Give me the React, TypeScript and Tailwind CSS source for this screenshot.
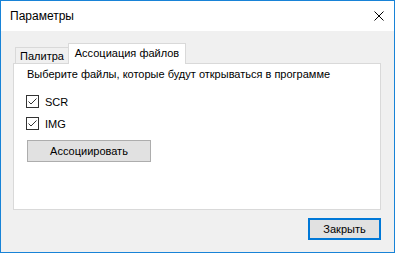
import React from 'react';

function CheckBox({ label }: { label: string }) {
  return (
    <label className="flex items-center h-[13px]">
      <span className="w-[13px] h-[13px] border border-[#333333] bg-white flex items-center justify-center">
        <svg width="11" height="11" viewBox="0 0 11 11" fill="none">
          <path d="M1.5 5.5 L4 8 L9.5 2.5" stroke="#333333" strokeWidth="1" />
        </svg>
      </span>
      <span className="ml-[6px] leading-[16px]">{label}</span>
    </label>
  );
}

export default function App() {
  return (
    <div className="w-[395px] h-[253px] border border-[#1883d7] bg-[#f0f0f0] flex flex-col text-[11px] text-black whitespace-nowrap font-['Liberation_Sans',Arial,sans-serif]">
      {/* заголовок окна */}
      <div className="h-[30px] bg-white flex items-center justify-between pl-[9px] pr-[10px]">
        <span className="leading-[16px] text-[12px]">Параметры</span>
        <svg width="10" height="10" viewBox="0 0 10 10" fill="none">
          <path d="M0.5 0.5 L9.5 9.5 M9.5 0.5 L0.5 9.5" stroke="#000" strokeWidth="1" />
        </svg>
      </div>

      <div className="flex flex-col flex-1">
        {/* вкладки */}
        <div className="mt-[12px] ml-[14px] h-[21px] flex items-end -mb-px relative z-10">
          <div className="w-[54px] h-[17px] bg-[#f0f0f0] border border-[#d9d9d9] flex items-center justify-center leading-[14px]">
            Палитра
          </div>
          <div className="w-[118px] h-[21px] -ml-px bg-white border border-b-0 border-[#d9d9d9] flex items-center justify-center leading-[14px] pb-[2px]">
            Ассоциация файлов
          </div>
        </div>

        <div className="ml-[12px] mr-[13px] h-[147px] bg-white border border-[#d9d9d9] pl-[12px] flex flex-col items-start">
          <p className="mt-[2px] ml-px leading-[16px]">Выберите файлы, которые будут открываться в программе</p>
          <div className="mt-[13px]">
            <CheckBox label="SCR" />
          </div>
          <div className="mt-[9px]">
            <CheckBox label="IMG" />
          </div>
          <button className="mt-[10px] ml-px w-[124px] h-[22px] bg-[#e1e1e1] border border-[#adadad] leading-[14px]">
            Ассоциировать
          </button>
        </div>

        <div className="mt-[8px] mr-[13px] flex justify-end">
          <button className="w-[73px] h-[22px] bg-[#e1e1e1] border-2 border-[#0078d7] leading-[14px]">
            Закрыть
          </button>
        </div>
      </div>
    </div>
  );
}
